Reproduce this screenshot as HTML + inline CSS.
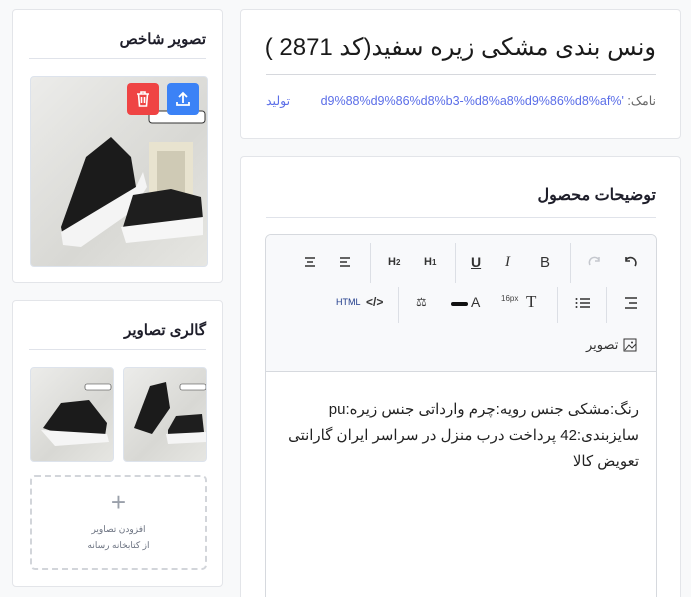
<!DOCTYPE html>
<html style="width:691px;height:597px;overflow:hidden"><head><meta charset="utf-8"><style>
*{box-sizing:border-box;margin:0;padding:0}
body{width:691px;height:597px;overflow:hidden;background:#f8f9fa;font-family:"Liberation Sans","Noto Sans CJK SC",sans-serif;color:#222;position:relative}
.card{position:absolute;background:#fff;border:1px solid #e3e5e9;border-radius:4px}
.ttl{position:absolute;right:16px;font-size:15px;font-weight:bold;direction:rtl;color:#1e1e2a}
.hr{position:absolute;height:1px;background:#e0e3ea}
.img{position:absolute;border:1px solid #dde3ec;border-radius:4px;overflow:hidden;background:linear-gradient(135deg,#ececea,#d8d8d4 60%,#e6e6e2)}
.tb{position:absolute;font-size:13px;color:#333}
.sep{position:absolute;width:1px;background:#dcdfe5}
</style></head><body>

<div class="card" style="left:12px;top:9px;width:211px;height:274px">
 <div class="ttl" style="top:20px">تصویر شاخص</div>
 <div class="hr" style="left:16px;right:16px;top:48px"></div>
 <div class="img" style="left:17px;top:66px;width:178px;height:191px">
  <svg width="178" height="191" viewBox="0 0 178 191">
   <rect x="118" y="65" width="44" height="60" fill="#e8e3cf"/><rect x="126" y="74" width="28" height="50" fill="#cfcab5"/>
   <path d="M30 150 L55 80 L80 60 L100 80 L105 110 L60 145 L32 160Z" fill="#1b1b1b"/>
   <path d="M30 155 L105 110 L112 95 L116 110 L100 135 L50 170 L32 168Z" fill="#f4f4f4"/>
   <path d="M92 150 L102 118 L140 112 L170 120 L172 142 L95 150Z" fill="#1e1e1e"/>
   <path d="M90 150 L172 140 L172 158 L95 166Z" fill="#f6f6f6"/>
   <rect x="118" y="34" width="56" height="12" rx="3" fill="#fff" stroke="#333"/>
  </svg>
 </div>
 <div style="position:absolute;left:114px;top:73px;width:32px;height:32px;background:#ef4444;border-radius:4px">
  <svg width="32" height="32" viewBox="0 0 32 32" fill="none" stroke="#fff" stroke-width="1.6"><path d="M10 11h12M14 11V9h4v2M11.5 11l1 12h7l1-12M14.5 14v6M17.5 14v6"/></svg></div>
 <div style="position:absolute;left:154px;top:73px;width:32px;height:32px;background:#3b82f6;border-radius:4px">
  <svg width="32" height="32" viewBox="0 0 32 32" fill="none" stroke="#fff" stroke-width="1.8"><path d="M16 20V10M12 14l4-4 4 4M10 19v3h12v-3"/></svg></div>
</div>

<div class="card" style="left:12px;top:300px;width:211px;height:287px">
 <div class="ttl" style="top:20px">گالری تصاویر</div>
 <div class="hr" style="left:16px;right:16px;top:48px"></div>
 <div class="img" style="left:17px;top:66px;width:84px;height:95px">
  <svg width="84" height="95"><path d="M12 60 L30 35 L58 32 L76 55 L74 68 L40 70Z" fill="#1b1b1b"/><path d="M10 62 L76 66 L78 74 L24 78Z" fill="#f5f5f5"/><rect x="54" y="16" width="26" height="6" rx="2" fill="#fff" stroke="#333" stroke-width=".6"/></svg></div>
 <div class="img" style="left:110px;top:66px;width:84px;height:95px">
  <svg width="84" height="95"><path d="M10 60 L26 18 L42 14 L46 40 L28 66Z" fill="#1b1b1b"/><path d="M44 62 L52 48 L78 46 L80 64 L44 68Z" fill="#1e1e1e"/><path d="M42 66 L82 64 L82 74 L44 76Z" fill="#f5f5f5"/><rect x="56" y="16" width="26" height="6" rx="2" fill="#fff" stroke="#333" stroke-width=".6"/></svg></div>
 <div style="position:absolute;left:17px;top:174px;width:177px;height:95px;border:2px dashed #d2d5da;border-radius:5px;text-align:center;direction:rtl">
  <div style="font-size:26px;color:#9aa0aa;margin-top:10px;line-height:30px;font-weight:300">+</div>
  <div style="font-size:9px;color:#6b7280;margin-top:4px;line-height:16px">افزودن تصاویر<br>از کتابخانه رسانه</div>
 </div>
</div>

<div class="card" style="left:240px;top:9px;width:441px;height:130px">
 <div style="position:absolute;right:24px;top:23px;font-size:24px;direction:rtl;color:#1a1a1a;white-space:nowrap">ونس بندی مشکی زیره سفید(کد  2871 )</div>
 <div class="hr" style="left:25px;right:24px;top:64px;background:#d6d8dd"></div>
 <div style="position:absolute;right:24px;left:25px;top:83px;font-size:12.5px;color:#666;direction:rtl;white-space:nowrap;overflow:hidden">نامک: <span style="color:#5b6ee8">'%d9%88%d9%86%d8%b3-%d8%a8%d9%86%d8%af</span></div>
 <div style="position:absolute;left:25px;top:83px;font-size:12.5px;color:#5b6ee8;background:#fff;padding-right:10px">تولید</div>
</div>

<div class="card" style="left:240px;top:156px;width:441px;height:441px;overflow:hidden;border-bottom:none;border-radius:4px 4px 0 0">
 <div class="ttl" style="top:28px;right:24px;font-size:16px">توضیحات محصول</div>
 <div class="hr" style="left:25px;right:24px;top:60px"></div>
 <div style="position:absolute;left:24px;top:77px;width:392px;height:380px;border:1px solid #d6d9de;border-radius:6px;overflow:hidden">
  <div style="position:absolute;left:0;top:0;right:0;height:137px;background:#f8f9fb;border-bottom:1px solid #d6d9de"></div>
 </div>
</div>

<div class="tb" style="left:303px;top:254px"><svg width="14" height="16"><path d="M2 4h10M4 8h6M2 12h10" stroke="#333" stroke-width="1.5"/></svg></div>
<div class="tb" style="left:338px;top:254px"><svg width="14" height="16"><path d="M2 4h10M2 8h7M2 12h10" stroke="#333" stroke-width="1.5"/></svg></div>
<div class="sep" style="left:370px;top:243px;height:40px"></div>
<div class="tb" style="left:388px;top:256px;font-size:11px;font-weight:bold">H<span style="font-size:8px">2</span></div>
<div class="tb" style="left:424px;top:256px;font-size:11px;font-weight:bold">H<span style="font-size:8px">1</span></div>
<div class="sep" style="left:455px;top:243px;height:40px"></div>
<div class="tb" style="left:471px;top:254px;font-weight:bold;text-decoration:underline;font-size:14px">U</div>
<div class="tb" style="left:505px;top:254px;font-style:italic;font-family:'Liberation Serif',serif;font-size:15px">I</div>
<div class="tb" style="left:540px;top:254px;font-size:15px">B</div>
<div class="sep" style="left:570px;top:243px;height:40px"></div>
<div class="tb" style="left:587px;top:254px"><svg width="16" height="16"><path d="M3 11 A5 5 0 0 1 12 6 M12 3v4h-4" fill="none" stroke="#c5c8ce" stroke-width="1.5"/></svg></div>
<div class="tb" style="left:622px;top:254px"><svg width="16" height="16"><path d="M13 12 A5 5 0 0 0 4 6 M4 3v4h4" fill="none" stroke="#333" stroke-width="1.6"/></svg></div>

<div class="tb" style="left:336px;top:297px;font-size:9px;color:#1e3a8a">HTML</div>
<div class="tb" style="left:366px;top:295px;font-size:12px;font-weight:bold">&lt;/&gt;</div>
<div class="sep" style="left:398px;top:287px;height:36px"></div>
<div class="tb" style="left:416px;top:295px;font-size:12px">⚖</div>
<div style="position:absolute;left:451px;top:302px;width:17px;height:4px;background:#111;border-radius:2px"></div>
<div class="tb" style="left:471px;top:294px;font-size:14px">A</div>
<div class="tb" style="left:501px;top:294px;font-size:8px;color:#444">16px</div>
<div class="tb" style="left:526px;top:292px;font-size:17px;font-family:'Liberation Serif',serif">T</div>
<div class="sep" style="left:557px;top:287px;height:36px"></div>
<div class="tb" style="left:575px;top:296px"><svg width="16" height="14"><path d="M5 3h10M5 7h10M5 11h10" stroke="#333" stroke-width="1.4"/><circle cx="1.5" cy="3" r="1" fill="#333"/><circle cx="1.5" cy="7" r="1" fill="#333"/><circle cx="1.5" cy="11" r="1" fill="#333"/></svg></div>
<div class="sep" style="left:606px;top:287px;height:36px"></div>
<div class="tb" style="left:624px;top:296px"><svg width="14" height="14"><path d="M1 2h12M5 7h8M1 12h12" stroke="#333" stroke-width="1.5"/></svg></div>

<div class="tb" style="left:586px;top:337px;font-size:13px;direction:rtl">تصویر</div>
<div class="tb" style="left:623px;top:338px"><svg width="14" height="14"><rect x="1" y="1" width="12" height="12" fill="none" stroke="#333"/><path d="M2 12l4-5 3 3 4-4" fill="none" stroke="#333"/><circle cx="9" cy="4.5" r="1" fill="#333"/></svg></div>

<div style="position:absolute;right:52px;top:397px;width:360px;font-size:15px;line-height:26px;direction:rtl;text-align:right;color:#222">رنگ:مشکی جنس رویه:چرم وارداتی جنس زیره:pu سایزبندی:42 پرداخت درب منزل در سراسر ایران گارانتی تعویض کالا</div>
</body></html>
